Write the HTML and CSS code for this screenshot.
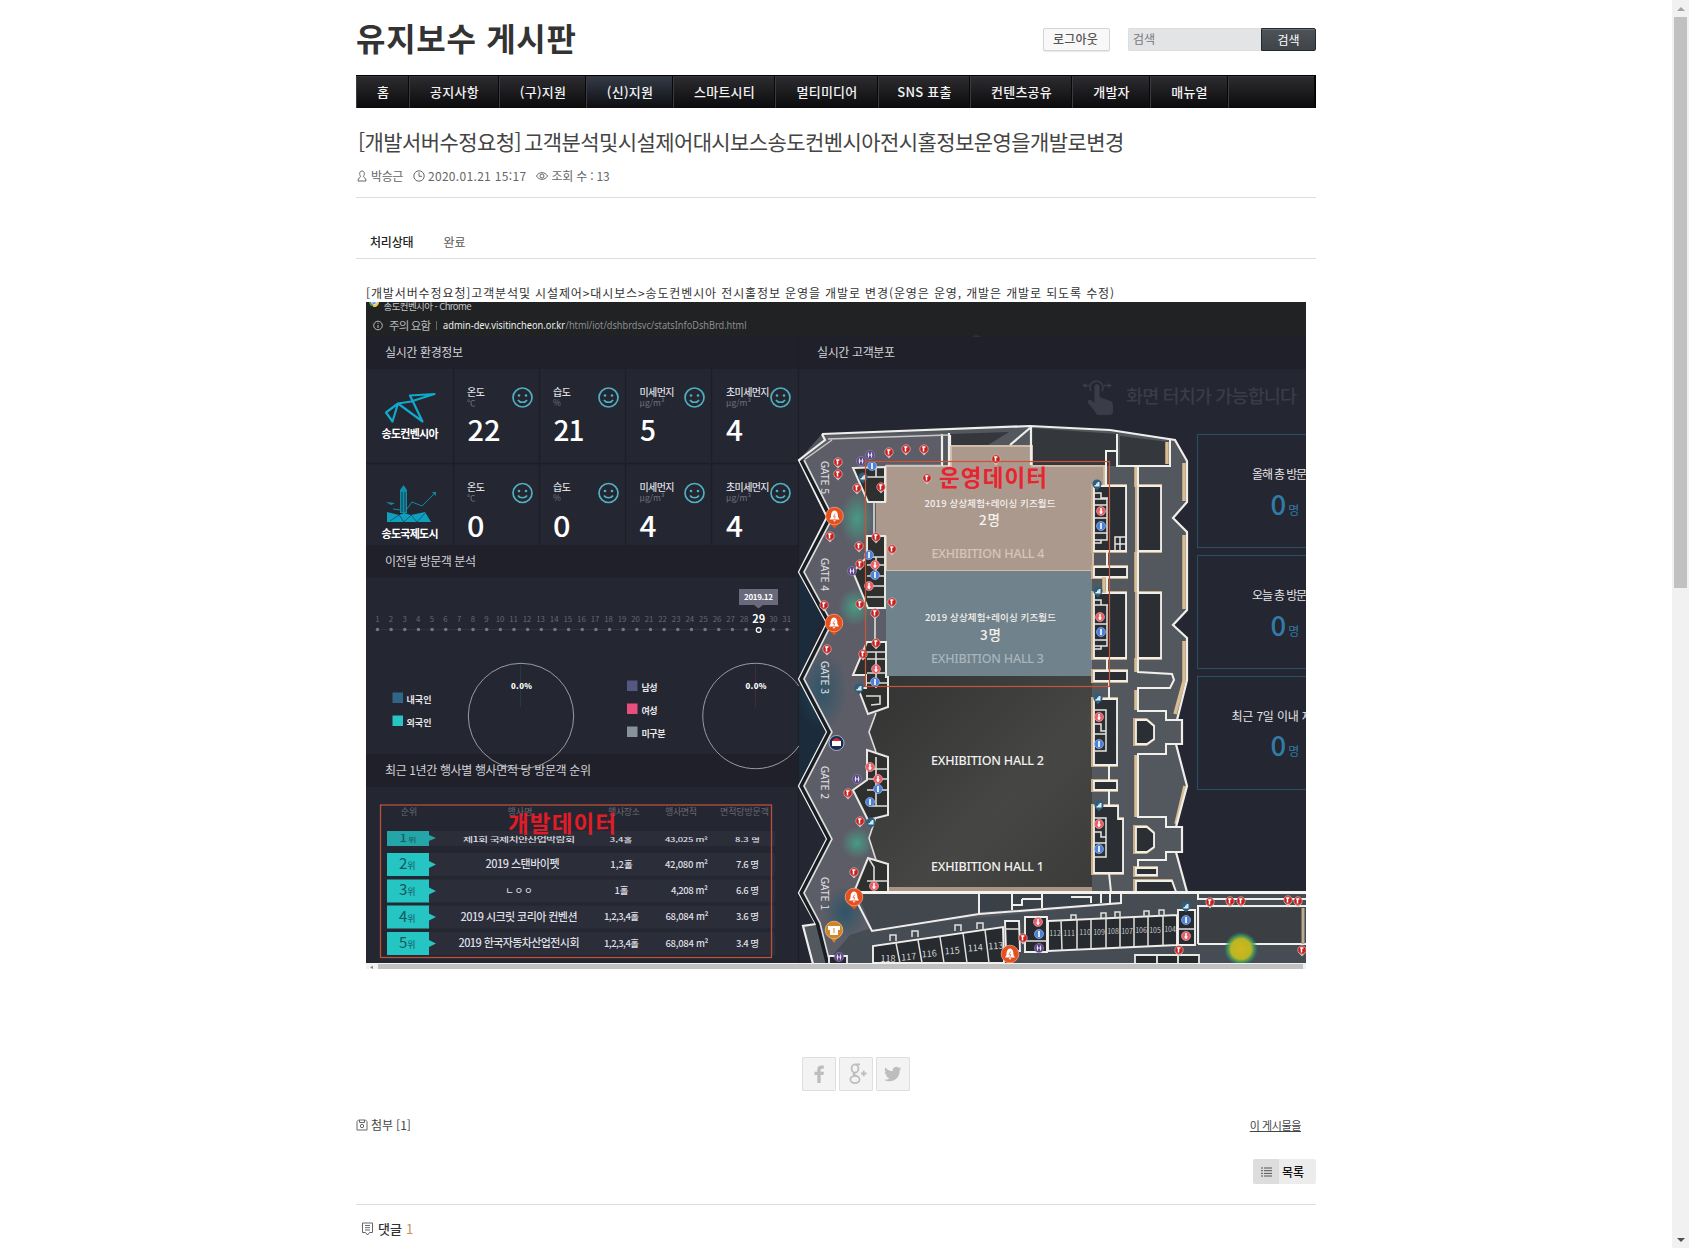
FILE: index.html
```html
<!DOCTYPE html>
<html lang="ko">
<head>
<meta charset="utf-8">
<title>유지보수 게시판</title>
<link rel="stylesheet" href="styles.css">
</head>
<body>
<div class="page">
  <header class="top">
    <h1 class="logo">유지보수 게시판</h1>
    <div class="tools">
      <a class="logout">로그아웃</a>
      <form class="search"><span class="field">검색</span><span class="go">검색</span></form>
    </div>
  </header>
  <nav class="nav">
    <a>홈</a><a>공지사항</a><a>(구)지원</a><a class="on">(신)지원</a><a>스마트시티</a><a>멀티미디어</a><a>SNS 표출</a><a>컨텐츠공유</a><a>개발자</a><a>매뉴얼</a><span></span>
  </nav>
  <section class="head">
    <h2><span class="tag">[개발서버수정요청]</span><span class="subject">고객분석및시설제어대시보스송도컨벤시아전시홀정보운영을개발로변경</span></h2>
    <div class="meta">
      <span class="who"><svg width="12" height="12" viewBox="0 0 12 12"><path d="M4.500 6.200C3 4 3.500 1 6 1s3 3 1.500 5.200M4.500 6.200C4.500 8 2 7.500 2 11h8c0-3.500-2.500-3-2.500-4.800"/></svg>박승근</span>
      <span class="when"><svg width="12" height="12" viewBox="0 0 12 12"><circle cx="6" cy="6" r="5.200"/><path d="M6 2.500V6.300h3"/></svg>2020.01.21 15:17</span>
      <span class="views"><svg width="12" height="12" viewBox="0 0 12 12"><path d="M.5 6C3 1.500 9 1.500 11.500 6 9 10.500 3 10.500.5 6z"/><circle cx="6" cy="6" r="2"/></svg>조회 수 : 13</span>
    </div>
  </section>
  <div class="status"><b>처리상태</b><span>완료</span></div>
  <article class="body">
    <p>[개발서버수정요청]고객분석및 시설제어&gt;대시보스&gt;송도컨벤시아 전시홀정보 운영을 개발로 변경(운영은 운영, 개발은 개발로 되도록 수정)</p>
    <svg class="shot" width="940" height="667" viewBox="366 302 940 667">
      <defs>
        <linearGradient id="hall" x1="0" y1="0" x2="1" y2="1"><stop offset="0" stop-color="#323332"/><stop offset=".6" stop-color="#464644"/><stop offset="1" stop-color="#3b3b39"/></linearGradient>
        <radialGradient id="heat"><stop offset="0" stop-color="#d0b81c"/><stop offset=".6" stop-color="#b9b526"/><stop offset=".8" stop-color="#3f9a5c" stop-opacity=".8"/><stop offset="1" stop-color="#2b7f7b" stop-opacity="0"/></radialGradient>
        <radialGradient id="green"><stop offset="0" stop-color="#45a287" stop-opacity=".9"/><stop offset="1" stop-color="#45a287" stop-opacity="0"/></radialGradient>
        <radialGradient id="blue"><stop offset="0" stop-color="#1b5168" stop-opacity=".7"/><stop offset="1" stop-color="#1b5168" stop-opacity="0"/></radialGradient>
        <g id="smile"><circle r="9.500" fill="none" stroke="#4fb0bf" stroke-width="1.700"/><circle cx="-3.500" cy="-2" r="1.300" fill="#4fb0bf"/><circle cx="3.500" cy="-2" r="1.300" fill="#4fb0bf"/><path d="M-4.500 2.500a5 4 0 0 0 9 0" fill="none" stroke="#4fb0bf" stroke-width="1.700"/></g>
        <g id="r"><path d="M-4 2L0 6.500 4 2z" fill="#d8c8c8"/><circle r="4.200" fill="#c9201f" stroke="#d9b9b6" stroke-width=".7"/><path d="M-1.800-2h3.200M-.5-1.500v4" stroke="#fff" stroke-width="1.500"/></g>
        <g id="m"><circle r="4.500" fill="#4c80d8" stroke="#adc4ee" stroke-width=".6"/><path d="M0-3v6" stroke="#fff" stroke-width="1.600"/></g>
        <g id="f"><circle r="4.500" fill="#e85e66" stroke="#f2b3b6" stroke-width=".6"/><path d="M0-3v6M-1.500 1h3" stroke="#fff" stroke-width="1.500"/></g>
        <g id="e"><path d="M-3 3L0 6.500 3 3z" fill="#2b5f7e"/><circle r="4.600" fill="#2b5f7e"/><path d="M-2.500 2.500V1H-1V-.5H.5V-2h2v4.500z" fill="#dde9ef"/></g>
        <g id="p"><circle r="4.600" fill="#5c4a87" stroke="#9485b4" stroke-width=".6"/><path d="M-1.500-2.500v5M1.500-2.500v5M-2.500 0h5" stroke="#e7e0f2"/></g>
        <g id="bell"><path d="M-5 7L0 12.500 5 7z" fill="#e5501c"/><circle r="8.800" fill="#e5501c" stroke="#f0a184" stroke-width=".8"/><path d="M0-5.500C-3-5-3.500-2-3.500 1L-5 3.500H5L3.500 1C3.500-2 3-5 0-5.500zM-1.500 4.300h3L0 5.800z" fill="#fff"/><path d="M.7-2.500L-1 .7H.8L0 2.700" fill="none" stroke="#e5501c" stroke-width=".7"/></g>
      </defs>

      <!-- browser frame and panel backgrounds -->
      <rect x="366" y="302" width="940" height="667" fill="#242631"/>
      <rect x="366" y="302" width="940" height="34" fill="#202224"/>
      <rect x="366" y="336" width="940" height="33" fill="#20202a"/>
      <rect x="366" y="545" width="433" height="32.500" fill="#20202a"/>
      <rect x="366" y="754" width="433" height="33" fill="#20202a"/>
      <path d="M453.500 369V545M539.500 369V545M625.500 369V545M711.500 369V545M366 463.500H798M798.500 336V963" stroke="#1d1e27" stroke-width="1.300"/>
      <path d="M369 302h10a5 5 0 0 1-5 4.500 5 5 0 0 1-5-4.500z" fill="#4b9b54"/><path d="M374 302h5a5 5 0 0 1-6 5z" fill="#f3c843"/><path d="M371.500 302h5a2.500 2.500 0 0 1-5 0z" fill="#4586e7" stroke="#fff" stroke-width=".7"/>
      <g class="t">
        <text x="383.500" y="309.500" font-size="9.500" textLength="88" fill="#c6c7c9">송도컨벤시아 - Chrome</text>
        <circle cx="378" cy="325.500" r="4.300" fill="none" stroke="#b8babd"/><path d="M378 325v3M378 322.700v1" stroke="#b8babd"/>
        <text x="389" y="329.500" font-size="11.500" textLength="42" fill="#b8babd">주의 요함</text><path d="M436.500 321v9" stroke="#66686b"/>
        <g font-family="Noto Sans" font-size="10.300"><text x="443" y="329" textLength="122" lengthAdjust="spacingAndGlyphs" fill="#eee">admin-dev.visitincheon.or.kr</text><text x="565.500" y="329" textLength="181" lengthAdjust="spacingAndGlyphs" fill="#8c8e91">/html/iot/dshbrdsvc/statsInfoDshBrd.html</text></g>
        <text x="385" y="356.500" font-size="12" textLength="78" fill="#d2d2d6">실시간 환경정보</text>
        <text x="817" y="356.500" font-size="12" textLength="78" fill="#d2d2d6">실시간 고객분포</text>
        <text x="385" y="566" font-size="12" textLength="91" fill="#d2d2d6">이전달 방문객 분석</text>
        <text x="385" y="775" font-size="12" textLength="206" fill="#d2d2d6">최근 1년간 행사별 행사면적 당 방문객 순위</text>
      </g>

      <!-- environment readings -->
      <path d="M434.500 394L410 395.500 422.500 421.500 398 403.500 392.500 421.500 386 412.500 398 403.500 411 401.500z" fill="none" stroke="#11a9cb" stroke-width="2.200" stroke-linejoin="round"/>
      <path d="M400 513V490l3.500-5 3.500 5v23z" fill="#128da8"/><path d="M402 492v20M405 492v20" stroke="#17384a"/><path d="M387 512l12 3 5-2 7 2 14-3 6 10H387z" fill="#10a0bd"/><path d="M390 521l9-6 5 7 7-7 6 7 8-9" fill="none" stroke="#0b5f76"/><path d="M393 509l8 1M407 509l5-7 10 4 12-12" fill="none" stroke="#118ba3"/><path d="M386 502l9 1-4 2z M432 492h4v4z" fill="#118ba3"/>
      <g class="t" font-weight="700" fill="#fff" font-size="11"><text x="381.500" y="437.500" textLength="57">송도컨벤시아</text><text x="381.500" y="538" textLength="57">송도국제도시</text></g>
      <g class="t" font-size="10" font-weight="500" fill="#dedee2">
        <text x="467" y="395.500" textLength="18">온도</text><text x="553" y="395.500" textLength="18">습도</text><text x="639.500" y="395.500" textLength="35">미세먼지</text><text x="726" y="395.500" textLength="43.500">초미세먼지</text>
        <text x="467" y="491" textLength="18">온도</text><text x="553" y="491" textLength="18">습도</text><text x="639.500" y="491" textLength="35">미세먼지</text><text x="726" y="491" textLength="43.500">초미세먼지</text>
      </g>
      <g class="t" font-size="8.500" fill="#71737d">
        <text x="467" y="405.500">℃</text><text x="553" y="405.500">%</text><text x="639.500" y="405.500" textLength="25">µg/m³</text><text x="726" y="405.500" textLength="25">µg/m³</text>
        <text x="467" y="501">℃</text><text x="553" y="501">%</text><text x="639.500" y="501" textLength="25">µg/m³</text><text x="726" y="501" textLength="25">µg/m³</text>
      </g>
      <g class="t" font-size="28" font-weight="500" fill="#fff">
        <text x="467.500" y="441" textLength="33" lengthAdjust="spacingAndGlyphs">22</text><text x="553.500" y="441" textLength="31">21</text><text x="640" y="441">5</text><text x="726" y="441" textLength="17" lengthAdjust="spacingAndGlyphs">4</text>
        <text x="467" y="536.500" textLength="17.500" lengthAdjust="spacingAndGlyphs">0</text><text x="553" y="536.500" textLength="17.500" lengthAdjust="spacingAndGlyphs">0</text><text x="639.500" y="536.500" textLength="17" lengthAdjust="spacingAndGlyphs">4</text><text x="726" y="536.500" textLength="17" lengthAdjust="spacingAndGlyphs">4</text>
      </g>
      <use href="#smile" x="522.500" y="397.500"/><use href="#smile" x="608.500" y="397.500"/><use href="#smile" x="694.500" y="397.500"/><use href="#smile" x="780.500" y="397.500"/>
      <use href="#smile" x="522.500" y="493"/><use href="#smile" x="608.500" y="493"/><use href="#smile" x="694.500" y="493"/><use href="#smile" x="780.500" y="493"/>

      <!-- day strip -->
      <path d="M375 629.500H792" stroke="#30323e"/>
      <path d="M377.500 629.500H788" stroke="#737587" stroke-width="3.600" stroke-linecap="round" stroke-dasharray="0 13.650"/>
      <rect x="739" y="589" width="39" height="16" fill="#69697b"/><path d="M754 605h9l-4.500 3.500z" fill="#69697b"/>
      <circle cx="758.700" cy="630" r="4.500" fill="#242631"/><circle cx="758.700" cy="630" r="2.400" fill="none" stroke="#fff" stroke-width="1.300"/>
      <g class="t c" font-size="7.800" fill="#666876"><text y="621.500"><tspan x="377.300">1</tspan><tspan x="391">2</tspan><tspan x="404.600">3</tspan><tspan x="418.200">4</tspan><tspan x="431.900">5</tspan><tspan x="445.500">6</tspan><tspan x="459.200">7</tspan><tspan x="472.800">8</tspan><tspan x="486.400">9</tspan><tspan x="500">10</tspan><tspan x="513.500">11</tspan><tspan x="527">12</tspan><tspan x="540.600">13</tspan><tspan x="554.200">14</tspan><tspan x="567.800">15</tspan><tspan x="581.400">16</tspan><tspan x="595">17</tspan><tspan x="608.500">18</tspan><tspan x="622">19</tspan><tspan x="635.500">20</tspan><tspan x="649">21</tspan><tspan x="662.600">22</tspan><tspan x="676.200">23</tspan><tspan x="689.800">24</tspan><tspan x="703.400">25</tspan><tspan x="717">26</tspan><tspan x="730.500">27</tspan><tspan x="744">28</tspan><tspan x="773.300">30</tspan><tspan x="786.700">31</tspan></text></g>
      <g class="t c" fill="#fff" font-weight="700"><text x="758.700" y="622.500" font-size="11">29</text><text x="758.500" y="600" font-size="8" textLength="29">2019.12</text></g>

      <!-- visitor circles -->
      <circle cx="521" cy="716" r="52.700" fill="none" stroke="#a7a8ad" stroke-width=".9"/>
      <path d="M799 686.300A52.700 52.700 0 1 0 799 745.700" fill="none" stroke="#a7a8ad" stroke-width=".9"/>
      <path d="M520.500 665v42" stroke="#1f3c43"/><path d="M755.500 665v42" stroke="#3f2c3d"/>
      <g class="t c" font-size="7.800" font-weight="900" fill="#fff"><text x="521.500" y="688.500" textLength="21">0.0%</text><text x="756" y="688.500" textLength="21">0.0%</text></g>
      <path d="M392.500 692.500h10.500v10.500h-10.500z" fill="#2f6687"/><path d="M392.500 715.500h10.500v10.500h-10.500z" fill="#27c6c4"/><path d="M627 680.500h10.500v10.500H627z" fill="#545781"/><path d="M627 703.500h10.500v10.500H627z" fill="#e84f7e"/><path d="M627 726.500h10.500v10.500H627z" fill="#89919a"/>
      <g class="t" font-size="9" font-weight="700" fill="#e6e6e8"><text x="406.500" y="702.500" textLength="25">내국인</text><text x="406.500" y="725.500" textLength="25">외국인</text><text x="641.500" y="690.500" textLength="16">남성</text><text x="641.500" y="713.500" textLength="16">여성</text><text x="641.500" y="736.500" textLength="24">미구분</text></g>

      <!-- event ranking -->
      <path d="M387 831h388v15H387zM387 853h388v23H387zM387 879.500h388v23H387zM387 905.500h388v23H387zM387 932h388v23H387z" fill="#2b2d39"/>
      <path d="M387 831h42v4l7 3-7 3v5h-42z" fill="#24a5a7"/>
      <path d="M387 853h42v8l7 3.500-7 3.500v8h-42zM387 879.500h42v8l7 3.500-7 3.500v8h-42zM387 905.500h42v8l7 3.500-7 3.500v8h-42zM387 932h42v8l7 3.500-7 3.500v8h-42z" fill="#25c5c4"/>
      <g class="t c" font-size="9" fill="#686a75"><text x="409" y="815">순위</text><text x="520" y="815">행사명</text><text x="624" y="815" textLength="32">행사장소</text><text x="681" y="815" textLength="32">행사면적</text><text x="744.500" y="815" textLength="49">면적당방문객</text></g>
      <g class="t" fill="#17565e" font-weight="400" font-size="15"><text transform="translate(399 842) scale(1 .65)">1<tspan font-size="9" dx="1">위</tspan></text><text x="399" y="869">2<tspan font-size="9">위</tspan></text><text x="399" y="895">3<tspan font-size="9">위</tspan></text><text x="399" y="922">4<tspan font-size="9">위</tspan></text><text x="399" y="948">5<tspan font-size="9">위</tspan></text></g>
      <g class="t c" fill="#dedee2" font-weight="500">
        <g transform="translate(0 841.500) scale(1 .62)" font-size="9.500"><text x="519" y="0" font-size="11" textLength="112">제1회 국제치안산업박람회</text><text x="621" y="0">3,4홀</text><text x="686.500" y="0" textLength="43">43,025 m²</text><text x="747.500" y="0">8.3 명</text></g>
        <g font-size="11"><text x="522.500" y="868" textLength="74">2019 스탠바이펫</text><text x="519" y="894" textLength="27" font-size="9">ㄴㅇㅇ</text><text x="519" y="920.500" textLength="117">2019 시크릿 코리아 컨벤션</text><text x="519" y="947" textLength="121">2019 한국자동차산업전시회</text></g>
        <g font-size="9.500"><text x="621.500" y="867.500">1,2홀</text><text x="621.500" y="894">1홀</text><text x="621.500" y="920" textLength="35">1,2,3,4홀</text><text x="621.500" y="946.500" textLength="35">1,2,3,4홀</text><text x="686.500" y="867.500" textLength="43">42,080 m²</text><text x="689.500" y="894" textLength="37">4,208 m²</text><text x="687" y="920" textLength="43">68,084 m²</text><text x="687" y="946.500" textLength="43">68,084 m²</text><text x="747.500" y="867.500" textLength="23">7.6 명</text><text x="747.500" y="894" textLength="23">6.6 명</text><text x="747.500" y="920" textLength="23">3.6 명</text><text x="747.500" y="946.500" textLength="23">3.4 명</text></g>
      </g>
      <rect x="380.500" y="805" width="391" height="152.500" fill="none" stroke="#b8523a" stroke-width="1.300"/>
      <text class="t" x="508" y="831.500" font-size="22.500" font-weight="700" fill="#e01c26" textLength="108">개발데이터</text>

      <!-- touch hint -->
      <path d="M972 336.500q4-2 9 0z" fill="#24446d"/>
      <g fill="#3a3c47"><path d="M1094.500 386q2.500-4 5 0v11l11 4q2.500 1 2.500 5v6q0 3-4 3h-12q-3-5-9-12-1-4 3-3l3.500 3z"/><path d="M1091 391a6.500 6.500 0 1 1 11 0M1083 385.500h6.500M1104 385.500h6.500" fill="none" stroke="#3a3c47" stroke-width="1.700"/></g><path d="M1082 385.500l4-2.500v5zM1112 385.500l-4-2.500v5z" fill="#3a3c47"/>
      <text class="t" x="1126" y="402.500" font-size="18.500" textLength="171" fill="#3a3c47" font-weight="500">화면 터치가 가능합니다</text>

      <!-- floor plan -->
      <path d="M799 560L824 614 799 679 825 732 799 786V640z" fill="#1c2b3b"/>
      <path d="M822 434L1030 426 1110 430 1175 440 1187 461V502L1173 518 1187 532V610L1173 625 1187 638V680L1177 720H1182V744H1176L1187 786 1176 827H1182V852H1176L1187 892H1306V963H813L803 926 815 923 799 893 827 839 799 786 827 732 799 679 827 623 799 572 827 517 799 460z" fill="#53585f"/>
      <path d="M827 436L942 433V466H886V892H870L872 931 1306 895V963H826L818 923 804 893 832 839 804 786 832 732 804 679 832 623 804 572 832 517 804 460z" fill="#5c5d67"/>
      <path d="M872 928L1121 904V893H1306V963H826L850 935z" fill="#454c54"/>
      <ellipse cx="857" cy="519" rx="17" ry="27" fill="url(#green)"/><ellipse cx="855" cy="607" rx="17" ry="19" fill="url(#green)"/><ellipse cx="857" cy="843" rx="16" ry="16" fill="url(#green)"/><ellipse cx="822" cy="690" rx="25" ry="40" fill="url(#blue)"/><ellipse cx="845" cy="912" rx="22" ry="26" fill="url(#blue)"/>
      <path d="M949 434l60-2-21 13h-39zM1031 428l86 6v32h-86zM1120 436l49 6v23h-49z" fill="#34383d"/>
      <path d="M951 446h81v20h74v20h-13v85H886V502h-10V502h10V466h65z" fill="#ab998d" stroke="#d3bbaa" stroke-width="2"/>
      <path d="M876 502h12v34h-12z" fill="#ab998d"/>
      <path d="M886 571h206v105H886v-68h-10v-37z" fill="#70828b"/>
      <path d="M888 676h204v216H888V864l-12-5-7-21 7-22 12-1V757l-12-5-7-20 7-19 12-6z" fill="url(#hall)"/>
      <path d="M886 887h206v5H886z" fill="#a99582"/>
      <path d="M853 468l32-1v35h-17zM867 536h18v72h-17l-15-36 14-15zM867 642h19v35h2v30l-20 7-10-26h8v-13h-13zM867 750l21 7v58l-20 5-15-30 14-10zM868 858l20 6v28h-34z" fill="#2d302f" stroke="#e9e8e3" stroke-width="2"/>
      <path d="M867 477h18M876 467v10M867 557h18M867 565h18M867 576h18M867 586h18M867 597h18M876 557v20M867 652h19M867 659h19M867 673h19M876 652v36M867 683h20M866 696h14v8l-9 1M867 769h21M867 779h21M867 790h20M876 757v49M869 806h19M869 859l5 8v14M867 881h20M874 502v33M875 608v34M876 713l-7 19 7 20M876 817l-7 21 7 22" fill="none" stroke="#deddd8" stroke-width="1.600"/>
      <path d="M1094 486h32v65h-32zM1138 486h23v65h-23zM1094 567h33v10h-33zM1094 593h32v65h-32zM1138 593h23v65h-23zM1094 671h33v10h-33zM1094 699h23v66h-23zM1094 781h23v9h-23zM1094 806h24v13h5v54h-29zM1136 720h11l7 6v13l-7 5h-11zM1136 827h11l7 6v14l-7 5h-11zM1136 868h21v7h-21zM1136 892v-11h36l4 11" fill="#2d3237" stroke="#caae87" stroke-width="4" transform="translate(-1 0)"/>
      <path d="M1094 486h32v65h-32zM1138 486h23v65h-23zM1094 567h33v10h-33zM1094 593h32v65h-32zM1138 593h23v65h-23zM1094 671h33v10h-33zM1094 699h23v66h-23zM1094 781h23v9h-23zM1094 806h24v13h5v54h-29zM1136 720h11l7 6v13l-7 5h-11zM1136 827h11l7 6v14l-7 5h-11zM1136 868h21v7h-21zM1136 892v-11h36l4 11" fill="#2b2f33" stroke="#f1efea" stroke-width="1.800"/>
      <path d="M1136 467v20M1167 442v22M1184 463v38M1184 535v74M1184 641v40l-9 33M1136 552v40M1136 658v14M1136 690v20M1136 755v62M1185 786l-9 38M1105 467v18M1104 577v16" fill="none" stroke="#d9bc92" stroke-width="3.500"/>
      <path d="M1117 434v32h53v-27M1106 486v-35h11M1138 466v20M1138 552v40M1107 552v15M1107 577v16M1107 658v13M1109 682v16M1109 765v16M1109 790v15M1109 873l2 19M1138 658v14l34 2 2 6-4 8h-32v23h28v9h11M1182 744h-16v10h-28v63h28v10h11M1182 852h-16v8h-28v8" fill="none" stroke="#f1efea" stroke-width="2"/>
      <path d="M1094 493h7v5h7M1094 499h13v41h-13M1094 518h13M1094 505h13M1094 533h13M1094 543h7v-3M1115 551v-14h11M1120 537v14M1115 544h11M1094 600h7v5h7M1094 605h13v41h-13M1094 624h13M1094 640h13M1094 649h7v-3M1094 710h12v41h-12M1094 724h7v7h5M1094 734h12M1094 818h12v39h-12M1094 832h7v5h5M1094 843h12" fill="none" stroke="#e6e5e0" stroke-width="1.500"/>
      <path d="M822 434L1030 426 1110 430 1175 440 1187 461V502L1173 518 1187 532V610L1173 625 1187 638V680L1177 720H1182V744H1176L1187 786 1176 827H1182V852H1176L1187 892M950 446v-11M1031 427v38M1030 428l-20 17M942 434v32M949 433v33" fill="none" stroke="#efeeea" stroke-width="2.200"/>
      <path d="M828 439l120-4M832 517L804 460 832 440M942 465.500h-56" fill="none" stroke="#c9c7c3" stroke-width="1.500"/>
      <path d="M822 434l3 6-26 20 28 57-28 55 28 51-28 56 28 53-28 54 28 53-28 54 17 31-13 2 10 38" fill="none" stroke="#eeefec" stroke-width="2.200"/>
      <path d="M804 460l29 57-29 55 28 51-28 56 28 53-28 54 28 53-28 54 16 30 10 40" fill="none" stroke="#191d24" stroke-width="5" transform="translate(-2 0)"/>
      <path d="M804 460l29 57-29 55 28 51-28 56 28 53-28 54 28 53-28 54 16 30 10 40" fill="none" stroke="#dedfdc" stroke-width="1.700"/>
      <path d="M854 892.500H1306" stroke="#f4f2ed" stroke-width="3"/>
      <!-- lower booths -->
      <path d="M858 894h121v20l-107 16z" fill="#42474e"/><path d="M979 894h142v9l-142 9z" fill="#3a4047"/>
      <path d="M856 900l16 31 107-17 142-11v-10M979 893v21M1012 893v17M1022 899h20M1042 893v15M1012 905h10v-6M1071 897h20v6M1101 894v9M1110 894v9" fill="none" stroke="#efeeea" stroke-width="2"/>
      <path d="M873 963v-17l130-19 1 36zM1005 921h14l1 30h-14zM1025 917h22v35h-22zM1048 921l129-6v30l-129 6zM1178 910h17v35h-17z" fill="#272b2f" stroke="#efeeea" stroke-width="1.900"/>
      <path d="M896 943l4 20M918 940l4 23M940 937l4 26M963 933l4 30M985 930l4 33M1005 929h14M1061 920l1 30M1077 920v30M1091 919v30M1106 918v30M1120 918v30M1134 917v30M1148 917v29M1163 916v29M1178 929h17M1025 941h22M890 941v-6h6v6M912 937v-6h6v6M955 931v-6h6v6M977 929v-6h6v6M1071 920v-5h5v5M1101 918v-5h5v5M1115 918v-6h5v6M1144 917v-6h5v6M1159 916v-6h5v6" fill="none" stroke="#e1e0dc" stroke-width="1.500"/>
      <path d="M1198 893v6h108M1198 944v-38h108" fill="none" stroke="#efeeea" stroke-width="2"/><path d="M1200 908h102v35h-102z" fill="#3b3f44"/><path d="M1198 944h108" stroke="#efeeea" stroke-width="2"/><path d="M1303 908v36" stroke="#bda98e" stroke-width="3"/>
      <path d="M1135 963v-8h64v8M1157 955v8M1178 955v8" fill="#252a2c" stroke="#e6e8e3" stroke-width="1.800"/><path d="M829 963v-7h18v7" fill="#25292f" stroke="#eee" stroke-width="1.800"/>
      <circle cx="1241" cy="949" r="17" fill="url(#heat)"/>
      <g class="t c" fill="#d4d6d7" font-size="9"><text x="888" y="962">118</text><text x="909" y="960" transform="rotate(-5 909 960)">117</text><text x="929.500" y="957" transform="rotate(-5 929 957)">116</text><text x="952.500" y="954" transform="rotate(-5 952 954)">115</text><text x="975.500" y="951" transform="rotate(-4 975 951)">114</text><text x="996" y="949" transform="rotate(-4 996 949)">113</text></g>
      <g class="t c" fill="#c3c7c9" font-size="7"><text x="1055" y="936">112</text><text x="1069" y="935.500">111</text><text x="1085" y="935">110</text><text x="1099" y="934.500">109</text><text x="1113" y="934">108</text><text x="1127" y="933.500">107</text><text x="1141" y="933">106</text><text x="1155" y="932.500">105</text><text x="1170" y="932">104</text></g>
      <g class="t" fill="#e0e2e5" font-size="10.500"><text transform="translate(820.500 461) rotate(90)" textLength="33">GATE 5</text><text transform="translate(820.500 558) rotate(90)" textLength="33">GATE 4</text><text transform="translate(820.500 661) rotate(90)" textLength="33">GATE 3</text><text transform="translate(820.500 766) rotate(90)" textLength="33">GATE 2</text><text transform="translate(820.500 877) rotate(90)" textLength="33">GATE 1</text></g>
      <!-- hall captions -->
      <g font-family="Noto Sans" font-size="12.500" font-weight="500"><text x="931.500" y="558" textLength="113" fill="#d4c6bd">EXHIBITION HALL 4</text><text x="931" y="663" textLength="113" fill="#a9b5bd">EXHIBITION HALL 3</text><text x="931" y="765" textLength="113" fill="#f1f1f1">EXHIBITION HALL 2</text><text x="931" y="871" textLength="113" fill="#f1f1f1">EXHIBITION HALL 1</text></g>
      <g class="t" font-size="9.500" font-weight="500" fill="#f4f0ed"><text x="924.500" y="506.500" textLength="131">2019 상상체험+레이싱 키즈월드</text><text x="925" y="621" textLength="131">2019 상상체험+레이싱 키즈월드</text><g font-size="13.500"><text x="979" y="525" textLength="21">2명</text><text x="980" y="639.500" textLength="21">3명</text></g></g>
      <!-- facility markers -->
      <use href="#r" x="838" y="462"/><use href="#r" x="838" y="474"/><use href="#r" x="889" y="452"/><use href="#r" x="906" y="449"/><use href="#r" x="924" y="449"/><use href="#r" x="996" y="459"/><use href="#r" x="927" y="478"/><use href="#r" x="857" y="488"/><use href="#r" x="881" y="487"/><use href="#r" x="830" y="536"/><use href="#r" x="876" y="537"/><use href="#r" x="859" y="546"/><use href="#r" x="892" y="549"/><use href="#r" x="860" y="564"/><use href="#r" x="860" y="604"/><use href="#r" x="892" y="602"/><use href="#r" x="875" y="613"/><use href="#r" x="824" y="605"/><use href="#r" x="827" y="649"/><use href="#r" x="876" y="643"/><use href="#r" x="863" y="654"/><use href="#r" x="848" y="793"/><use href="#r" x="860" y="821"/><use href="#r" x="854" y="872"/><use href="#r" x="1023" y="938"/><use href="#r" x="1210" y="902"/><use href="#r" x="1230" y="901"/><use href="#r" x="1241" y="901"/><use href="#r" x="1288" y="900"/><use href="#r" x="1298" y="901"/><use href="#r" x="1179" y="950"/><use href="#r" x="1302" y="950"/>
      <use href="#m" x="872" y="466"/><use href="#m" x="869" y="555"/><use href="#m" x="875" y="575"/><use href="#m" x="875" y="682"/><use href="#m" x="1101" y="526"/><use href="#m" x="1101" y="632"/><use href="#m" x="1099" y="744"/><use href="#m" x="878" y="789"/><use href="#m" x="870" y="802"/><use href="#m" x="1039" y="934"/><use href="#m" x="1099" y="849"/><use href="#m" x="1186" y="920"/>
      <use href="#f" x="875" y="565"/><use href="#f" x="869" y="586"/><use href="#f" x="876" y="669"/><use href="#f" x="870" y="767"/><use href="#f" x="1101" y="511"/><use href="#f" x="1100" y="617"/><use href="#f" x="1099" y="717"/><use href="#f" x="878" y="779"/><use href="#f" x="874" y="886"/><use href="#f" x="1038" y="922"/><use href="#f" x="1099" y="824"/><use href="#f" x="1186" y="936"/>
      <use href="#e" x="863" y="477"/><use href="#e" x="1097" y="484"/><use href="#e" x="1098" y="591"/><use href="#e" x="1098" y="698"/><use href="#e" x="859" y="688"/><use href="#e" x="871" y="822"/><use href="#e" x="1099" y="805"/><use href="#e" x="1186" y="906"/>
      <use href="#p" x="861" y="461"/><use href="#p" x="870" y="455"/><use href="#p" x="852" y="571"/><use href="#p" x="857" y="779"/><use href="#p" x="839" y="957"/><use href="#p" x="1039" y="948"/>
      <use href="#bell" x="834.500" y="516"/><use href="#bell" x="834" y="623"/><use href="#bell" x="854" y="897"/><use href="#bell" x="1010" y="954"/>
      <path d="M830 937l4 6 4-6z" fill="#cf8529"/><circle cx="834" cy="930" r="8.800" fill="#cf8529" stroke="#e9bd85" stroke-width=".8"/><path d="M828 926h12v4h-2v5h-8v-5h-2z" fill="#fff"/><path d="M834 928v5" stroke="#cf8529"/>
      <circle cx="836.500" cy="743" r="7.500" fill="#182c57" stroke="#c3cbdc" stroke-width=".8"/><path d="M832 741h9v5h-9z" fill="#fff"/><path d="M832 741q4.500-6 9 0z" fill="#d22b2e"/>
      <rect x="865.500" y="461.500" width="244" height="225" fill="none" stroke="#ca5438" stroke-width="1.200"/>
      <text class="t" x="939" y="485.500" font-size="22.500" font-weight="700" fill="#e82430" textLength="108">운영데이터</text>

      <!-- totals cut off at the window edge -->
      <path d="M1310 434.500H1197.500V547.500H1310M1310 555.500H1197.500V668.500H1310M1310 676.500H1197.500V789.500H1310" fill="none" stroke="#275068" stroke-width="1.100"/>
      <g class="t" font-size="12" fill="#e4e4e7"><text x="1252" y="479" textLength="65">올해 총 방문객</text><text x="1252" y="600" textLength="65">오늘 총 방문객</text><text x="1231.500" y="720.500" textLength="103">최근 7일 이내 재방문</text></g>
      <g class="t" font-size="27.500" font-weight="500" fill="#317ba5"><text x="1270.500" y="515">0<tspan font-size="12" font-weight="400" dx="2">명</tspan></text><text x="1270.500" y="636">0<tspan font-size="12" font-weight="400" dx="2">명</tspan></text><text x="1270.500" y="756">0<tspan font-size="12" font-weight="400" dx="2">명</tspan></text></g>
      <path d="M366 963h940v6H366z" fill="#f1f1f1"/><path d="M378 964h925v5H378z" fill="#c1c1c1"/><path d="M373 965.500v3.500l-3-1.500z" fill="#888"/>
    </svg>
  </article>
  <div class="share">
    <a><svg width="32" height="32" viewBox="0 0 32 32"><path d="M14.300 25v-8H11.500v-3.200h2.800v-2.300c0-2.700 1.500-4 4-4h2.500v3.200h-1.600c-1.200 0-1.500.5-1.500 1.500v1.600h3.200l-.4 3.200h-2.800v8z"/></svg></a>
    <a><svg width="32" height="32" viewBox="0 0 32 32"><g fill="none" stroke="#bdbdbd" stroke-width="1.800"><ellipse cx="15" cy="10.500" rx="3.400" ry="4.200"/><ellipse cx="15" cy="21.500" rx="4.600" ry="3.700"/><path d="M15.500 6.300h4.500M15.500 14.700c-4 1.300-1 2.300 1.500 3.500M21 15.500h5.500M23.700 12.700v5.600"/></g></svg></a>
    <a><svg width="32" height="32" viewBox="0 0 32 32"><path d="M24.500 10.500l-1.900.5 1.400-2-2.200.9a3.700 3.700 0 0 0-6.200 3.300C12.500 13 10 11.500 8.300 9.400c-1 1.700-.5 3.800 1.100 4.900l-1.600-.4c0 1.800 1.200 3.200 2.900 3.600l-1.600.1c.5 1.500 1.800 2.500 3.400 2.600a7.300 7.300 0 0 1-5.300 1.500c6.800 4.300 15.700-.3 15.500-9.400z"/></svg></a>
  </div>
  <div class="files">
    <span class="attach"><svg width="12" height="12" viewBox="0 0 12 12"><path d="M1 2.500V11h10V2.500L9.500 1h-7zM3.500 1v2.500h5V1"/><circle cx="6" cy="7" r="1.700"/></svg>첨부 <em>[1]</em></span>
    <a>이 게시물을</a>
  </div>
  <div class="actions"><a class="list"><i><svg width="11" height="10" viewBox="0 0 11 10"><path d="M0 1h2M3 1h8M0 3.700h2M3 3.700h8M0 6.400h2M3 6.400h8M0 9h2M3 9h8"/></svg></i><b>목록</b></a></div>
  <div class="comments"><svg width="13" height="14" viewBox="0 0 13 14"><path d="M1.500 1h10v9.500h-3L6.500 13l-2-2.500h-3zM4 3.500h5M4 5.700h5M4 8h5"/></svg><b>댓글</b><em>1</em></div>
</div>
<aside class="scroll"><i class="up"></i><span class="thumb"></span><i class="down"></i></aside>
</body>
</html>
```
FILE: styles.css
```css
* { box-sizing: border-box; }
body {
  margin: 0;
  height: 1248px;
  overflow: hidden;
  display: flex;
  background: #fff;
  color: #333;
  font: 12px/18px "Noto Sans CJK KR", "Noto Sans", sans-serif;
}
h1, h2, p { margin: 0; }
em, i { font-style: normal; }
.page { width: 960px; margin: 0 auto; }
.top { height: 75px; display: flex; justify-content: space-between; align-items: flex-start; }
.logo { padding-top: 16px; font-size: 32px; line-height: 42px; font-weight: 700; letter-spacing: .7px; white-space: nowrap; }
.tools { display: flex; padding-top: 28px; gap: 18px; }
.logout { width: 67px; height: 23px; border: 1px solid #d5d5d5; border-radius: 2px; background: #f8f8f8; box-shadow: 0 1px 1px #e8e8e8; text-align: center; line-height: 20px; color: #555; font-weight: 500; letter-spacing: .2px; padding-right: 2px; }
.search { display: flex; height: 23px; }
.field { width: 133px; border: 1px solid #dcdddf; border-right: 0; border-radius: 2px 0 0 2px; background: #e3e4e6; padding-left: 4px; line-height: 20px; color: #777; }
.go { width: 55px; border: 1px solid #25292e; border-radius: 0 2px 2px 0; background: linear-gradient(#4e5358, #3f4449); box-shadow: inset 0 1px #6c7075; text-align: center; line-height: 22px; color: #fff; }
.nav {
  height: 33px;
  display: grid;
  grid-template-columns: 53px 90px 87px 87px 102px 103px 92px 102px 78px 78px 1fr;
  border-top: 1px solid #000;
  border-right: 1px solid #000;
  background: linear-gradient(#2d2d31, #0b0b0d);
}
.nav a, .nav span { border-left: 1px solid #3b3b3f; border-right: 1px solid #08080a; box-shadow: inset 0 1px #38383c; text-align: center; line-height: 31px; font-size: 13px; font-weight: 500; color: #f3f3f3; white-space: nowrap; letter-spacing: .25px; padding-left: 1px; }
.nav a.on { background: linear-gradient(#353b48, #0d0e12); }
.head { height: 90px; border-bottom: 1px solid #ddd; padding-top: 18px; }
.head h2 { display: flex; gap: 3px; padding-left: 2px; font-size: 21px; line-height: 30px; font-weight: 400; color: #444; letter-spacing: -.58px; white-space: nowrap; }
.meta { display: flex; gap: 10px; padding-top: 11px; color: #666; line-height: 18px; }
.meta span { display: flex; align-items: center; gap: 3px; white-space: nowrap; }
.meta .who { letter-spacing: -.4px; }
.meta .when { letter-spacing: .32px; }
.meta .views { letter-spacing: -.2px; }
.meta svg, .attach svg, .comments svg { fill: none; stroke: #666; stroke-width: 1; }
.status { height: 61px; border-bottom: 1px solid #ddd; padding: 35px 0 0 14px; display: flex; gap: 30px; line-height: 18px; color: #555; }
.status b { font-weight: 500; color: #222; letter-spacing: -.2px; }
.body { padding: 24px 10px 0; }
.body p { height: 19px; line-height: 19px; color: #333; font-weight: 400; white-space: nowrap; letter-spacing: .88px; }
.shot { display: block; }
.t { font-family: "Noto Sans CJK KR", "Noto Sans", sans-serif; }
.c { text-anchor: middle; }
.share { margin-top: 88px; height: 35px; display: flex; gap: 3px; padding-left: 446px; }
.share a { width: 34px; height: 34px; border: 1px solid #dedede; border-radius: 1px; background: #f3f3f3; }
.share svg { display: block; fill: #bdbdbd; }
.files { margin-top: 24px; height: 18px; display: flex; justify-content: space-between; padding-right: 15px; color: #444; }
.attach { display: flex; align-items: center; gap: 3px; }
.files a { text-decoration: underline; font-size: 11px; letter-spacing: -.4px; }
.actions { margin-top: 25px; display: flex; justify-content: flex-end; }
.list { width: 63px; height: 25px; display: flex; border-radius: 2px; background: #ececec; line-height: 25px; color: #111; overflow: hidden; }
.list i { width: 26px; background: #ddd; display: flex; align-items: center; justify-content: center; }
.list svg { stroke: #555; stroke-width: 1; }
.list b { padding-left: 3px; font-weight: 500; }
.comments { margin-top: 20px; border-top: 1px solid #ddd; padding: 14px 0 0 5px; display: flex; align-items: center; gap: 4px; font-size: 13px; line-height: 20px; }
.comments b { font-weight: 500; }
.comments em { color: #c89058; }
.scroll { width: 17px; height: 1248px; background: #f1f1f1; display: flex; flex-direction: column; align-items: center; }
.scroll i { width: 0; height: 0; border: 4px solid transparent; }
.scroll .up { border-bottom-color: #a3a3a3; border-top: 0; margin: 7px 0 6px; }
.thumb { width: 13px; height: 571px; background: #c1c1c1; }
.scroll .down { border-top-color: #505050; border-bottom: 0; margin: auto 0 6px; }
```
